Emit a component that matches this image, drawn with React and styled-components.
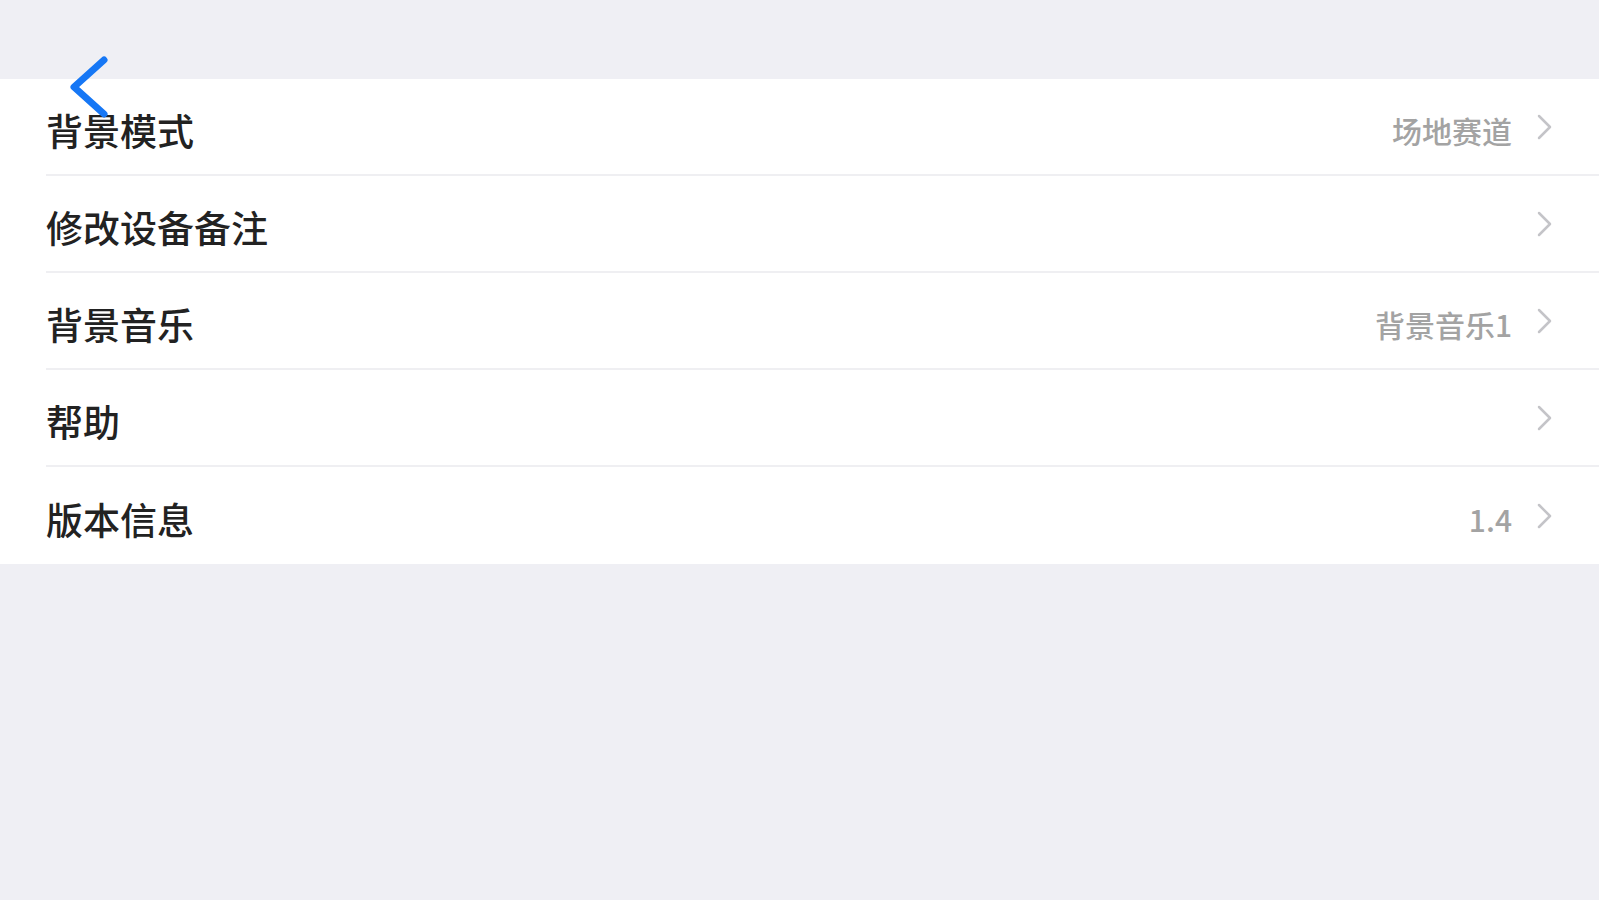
import React from "react";
import styled, { createGlobalStyle } from "styled-components";

const GlobalStyle = createGlobalStyle`
  html, body {
    margin: 0;
    padding: 0;
    background: #efeff4;
    font-family: "Noto Sans CJK SC", "Noto Sans", sans-serif;
  }
`;

const Page = styled.div`
  min-height: 900px;
  background: #efeff4;
`;

const NavBar = styled.header`
  position: relative;
  height: 79px;
  background: #efeff4;
`;

const BackButton = styled.button`
  position: absolute;
  left: 68px;
  top: 56px;
  z-index: 2;
  padding: 0;
  border: none;
  background: transparent;
  cursor: pointer;
  line-height: 0;
`;

const List = styled.ul`
  margin: 0;
  padding: 0;
  list-style: none;
  background: #fff;
`;

const Row = styled.li`
  padding-left: 46px;
  height: 97px;
`;

const RowInner = styled.div`
  box-sizing: border-box;
  height: 100%;
  display: flex;
  align-items: center;
  padding: 6px 46px 0 0;
  border-bottom: ${(p) => (p.last ? "none" : "2px solid #efeff2")};
`;

const Label = styled.span`
  flex: 1;
  font-size: 37px;
  font-weight: 500;
  color: #222;
`;

const Value = styled.span`
  font-size: 30px;
  font-weight: 500;
  color: #a3a3a3;
  margin-right: 24px;
`;

const Chevron = styled.svg`
  width: 17px;
  height: 26px;
  margin-top: -6px;
  flex-shrink: 0;
`;

const items = [
  { label: "背景模式", value: "场地赛道" },
  { label: "修改设备备注" },
  { label: "背景音乐", value: "背景音乐1" },
  { label: "帮助" },
  { label: "版本信息", value: "1.4" },
];

export default function App() {
  return (
    <Page>
      <GlobalStyle />
      <NavBar>
        <BackButton aria-label="back">
          <svg width="40" height="62" viewBox="0 0 40 62">
            <polyline
              points="36,4 6,31 36,58"
              fill="none"
              stroke="#1677f5"
              strokeWidth="7"
              strokeLinecap="round"
              strokeLinejoin="round"
            />
          </svg>
        </BackButton>
      </NavBar>
      <List>
        {items.map((item, i) => (
          <Row key={item.label}>
            <RowInner last={i === items.length - 1}>
              <Label>{item.label}</Label>
              {item.value && <Value>{item.value}</Value>}
              <Chevron viewBox="0 0 17 26">
                <polyline
                  points="3,2 14,13 3,24"
                  fill="none"
                  stroke="#c4c4c8"
                  strokeWidth="2.5"
                  strokeLinecap="round"
                  strokeLinejoin="round"
                />
              </Chevron>
            </RowInner>
          </Row>
        ))}
      </List>
    </Page>
  );
}
